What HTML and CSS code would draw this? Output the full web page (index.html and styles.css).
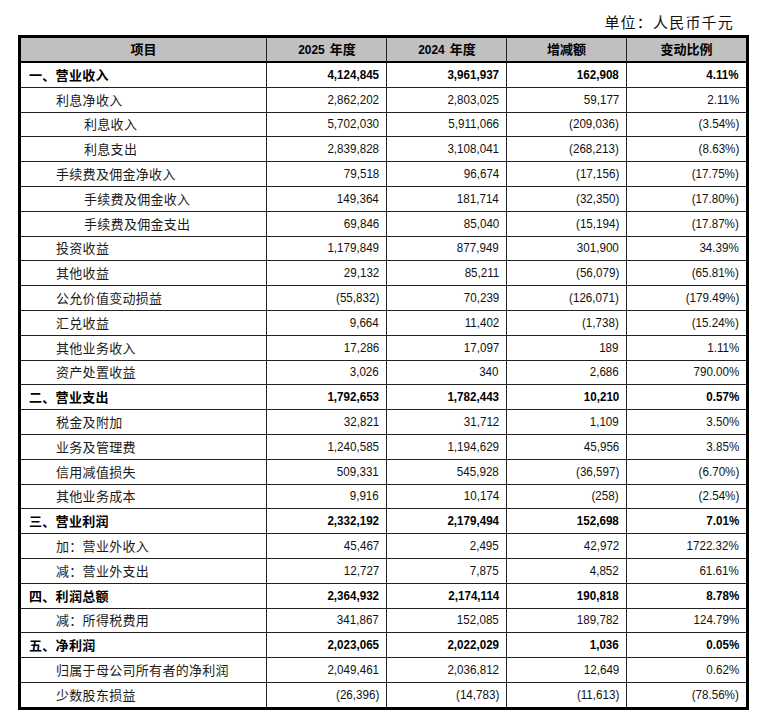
FILE: index.html
```html
<!DOCTYPE html>
<html lang="zh">
<head>
<meta charset="utf-8">
<link rel="stylesheet" href="styles.css">
</head>
<body>
<div class="unit">单位：人民币千元</div>
<table class="fin">
  <colgroup>
    <col class="c-item"><col class="c-num"><col class="c-num"><col class="c-num"><col class="c-pct">
  </colgroup>
  <thead>
    <tr><th>项目</th><th><span class="n">2025</span> 年度</th><th><span class="n">2024</span> 年度</th><th>增减额</th><th>变动比例</th></tr>
  </thead>
  <tbody>
    <tr class="sec"><td class="l0">一、营业收入</td><td><span class="v">4,124,845</span></td><td><span class="v">3,961,937</span></td><td><span class="v">162,908</span></td><td><span class="v">4.11%</span></td></tr>
    <tr><td class="l1">利息净收入</td><td><span class="v">2,862,202</span></td><td><span class="v">2,803,025</span></td><td><span class="v">59,177</span></td><td><span class="v">2.11%</span></td></tr>
    <tr><td class="l2">利息收入</td><td><span class="v">5,702,030</span></td><td><span class="v">5,911,066</span></td><td><span class="v">(209,036)</span></td><td><span class="v">(3.54%)</span></td></tr>
    <tr><td class="l2">利息支出</td><td><span class="v">2,839,828</span></td><td><span class="v">3,108,041</span></td><td><span class="v">(268,213)</span></td><td><span class="v">(8.63%)</span></td></tr>
    <tr><td class="l1">手续费及佣金净收入</td><td><span class="v">79,518</span></td><td><span class="v">96,674</span></td><td><span class="v">(17,156)</span></td><td><span class="v">(17.75%)</span></td></tr>
    <tr><td class="l2">手续费及佣金收入</td><td><span class="v">149,364</span></td><td><span class="v">181,714</span></td><td><span class="v">(32,350)</span></td><td><span class="v">(17.80%)</span></td></tr>
    <tr><td class="l2">手续费及佣金支出</td><td><span class="v">69,846</span></td><td><span class="v">85,040</span></td><td><span class="v">(15,194)</span></td><td><span class="v">(17.87%)</span></td></tr>
    <tr><td class="l1">投资收益</td><td><span class="v">1,179,849</span></td><td><span class="v">877,949</span></td><td><span class="v">301,900</span></td><td><span class="v">34.39%</span></td></tr>
    <tr><td class="l1">其他收益</td><td><span class="v">29,132</span></td><td><span class="v">85,211</span></td><td><span class="v">(56,079)</span></td><td><span class="v">(65.81%)</span></td></tr>
    <tr><td class="l1">公允价值变动损益</td><td><span class="v">(55,832)</span></td><td><span class="v">70,239</span></td><td><span class="v">(126,071)</span></td><td><span class="v">(179.49%)</span></td></tr>
    <tr><td class="l1">汇兑收益</td><td><span class="v">9,664</span></td><td><span class="v">11,402</span></td><td><span class="v">(1,738)</span></td><td><span class="v">(15.24%)</span></td></tr>
    <tr><td class="l1">其他业务收入</td><td><span class="v">17,286</span></td><td><span class="v">17,097</span></td><td><span class="v">189</span></td><td><span class="v">1.11%</span></td></tr>
    <tr><td class="l1">资产处置收益</td><td><span class="v">3,026</span></td><td><span class="v">340</span></td><td><span class="v">2,686</span></td><td><span class="v">790.00%</span></td></tr>
    <tr class="sec"><td class="l0">二、营业支出</td><td><span class="v">1,792,653</span></td><td><span class="v">1,782,443</span></td><td><span class="v">10,210</span></td><td><span class="v">0.57%</span></td></tr>
    <tr><td class="l1">税金及附加</td><td><span class="v">32,821</span></td><td><span class="v">31,712</span></td><td><span class="v">1,109</span></td><td><span class="v">3.50%</span></td></tr>
    <tr><td class="l1">业务及管理费</td><td><span class="v">1,240,585</span></td><td><span class="v">1,194,629</span></td><td><span class="v">45,956</span></td><td><span class="v">3.85%</span></td></tr>
    <tr><td class="l1">信用减值损失</td><td><span class="v">509,331</span></td><td><span class="v">545,928</span></td><td><span class="v">(36,597)</span></td><td><span class="v">(6.70%)</span></td></tr>
    <tr><td class="l1">其他业务成本</td><td><span class="v">9,916</span></td><td><span class="v">10,174</span></td><td><span class="v">(258)</span></td><td><span class="v">(2.54%)</span></td></tr>
    <tr class="sec"><td class="l0">三、营业利润</td><td><span class="v">2,332,192</span></td><td><span class="v">2,179,494</span></td><td><span class="v">152,698</span></td><td><span class="v">7.01%</span></td></tr>
    <tr><td class="l1">加：营业外收入</td><td><span class="v">45,467</span></td><td><span class="v">2,495</span></td><td><span class="v">42,972</span></td><td><span class="v">1722.32%</span></td></tr>
    <tr><td class="l1">减：营业外支出</td><td><span class="v">12,727</span></td><td><span class="v">7,875</span></td><td><span class="v">4,852</span></td><td><span class="v">61.61%</span></td></tr>
    <tr class="sec"><td class="l0">四、利润总额</td><td><span class="v">2,364,932</span></td><td><span class="v">2,174,114</span></td><td><span class="v">190,818</span></td><td><span class="v">8.78%</span></td></tr>
    <tr><td class="l1">减：所得税费用</td><td><span class="v">341,867</span></td><td><span class="v">152,085</span></td><td><span class="v">189,782</span></td><td><span class="v">124.79%</span></td></tr>
    <tr class="sec"><td class="l0">五、净利润</td><td><span class="v">2,023,065</span></td><td><span class="v">2,022,029</span></td><td><span class="v">1,036</span></td><td><span class="v">0.05%</span></td></tr>
    <tr><td class="l1">归属于母公司所有者的净利润</td><td><span class="v">2,049,461</span></td><td><span class="v">2,036,812</span></td><td><span class="v">12,649</span></td><td><span class="v">0.62%</span></td></tr>
    <tr><td class="l1">少数股东损益</td><td><span class="v">(26,396)</span></td><td><span class="v">(14,783)</span></td><td><span class="v">(11,613)</span></td><td><span class="v">(78.56%)</span></td></tr>
  </tbody>
</table>
</body>
</html>
```
FILE: styles.css
```css
html, body {
  margin: 0;
  padding: 0;
  background: #fff;
}
body {
  color: #000;
  font-family: "Liberation Sans", "Noto Sans CJK SC", sans-serif;
}
.unit {
  height: 35px;
  box-sizing: border-box;
  padding: 13px 24px 0 0;
  text-align: right;
  font-family: "Noto Sans CJK SC", sans-serif;
  font-size: 15px;
  line-height: 18px;
  letter-spacing: 1.2px;
  color: #111;
}
.fin {
  margin-left: 18px;
  width: 728px;
  border-collapse: collapse;
  table-layout: fixed;
  border: 3px solid #000;
}
.c-item { width: 247px; }
.c-num { width: 120px; }
.c-pct { width: 121px; }
.fin th, .fin td {
  border: 1px solid #222;
  padding: 0 7px;
  font-size: 13.5px;
  line-height: 16px;
  white-space: nowrap;
}
.fin th {
  height: 23px;
  background: #c0c0c0;
  font-family: "Liberation Sans", "Noto Sans CJK SC", sans-serif;
  font-weight: bold;
  font-size: 13px;
  text-align: center;
  border-bottom: 2px solid #000;
}
.fin th .n {
  display: inline-block;
  transform: scaleX(0.92);
}
.fin td {
  height: 23.8px;
  text-align: right;
  color: #111;
}
.fin td .v {
  display: inline-block;
  transform: scaleX(0.86);
  transform-origin: right center;
}
.fin td:first-child {
  text-align: left;
  font-family: "Noto Sans CJK SC", sans-serif;
  font-size: 13px;
  letter-spacing: 0.3px;
  color: #1a1a1a;
}
.fin td.l0 { padding-left: 8px; }
.fin td.l1 { padding-left: 35px; }
.fin td.l2 { padding-left: 63px; }
.fin tr.sec td {
  font-weight: bold;
  color: #000;
}
```
